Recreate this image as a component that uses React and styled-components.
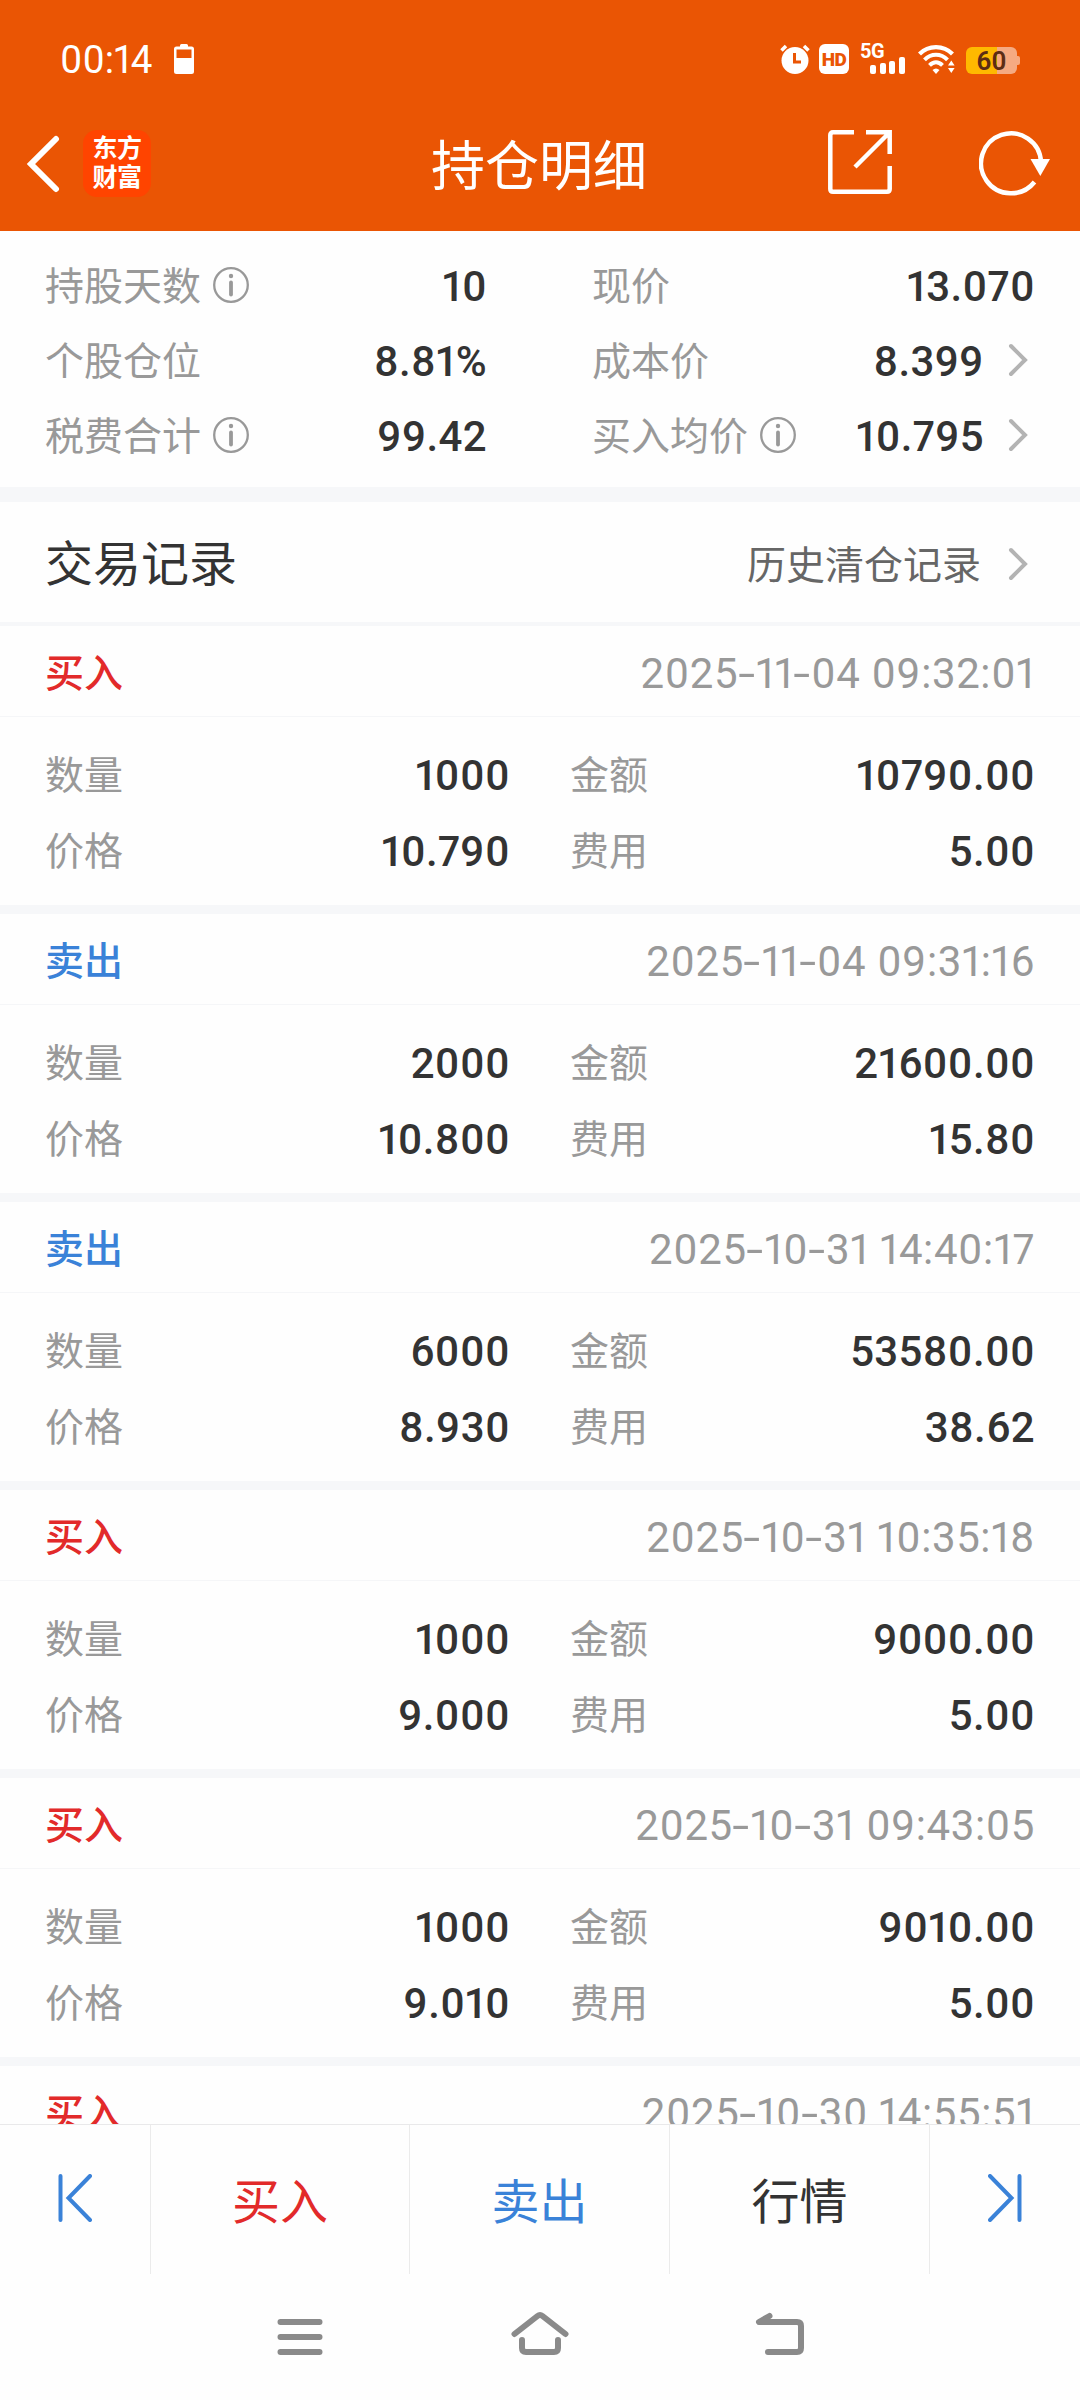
import React from "react";
import styled, { createGlobalStyle } from "styled-components";

const GlobalStyle = createGlobalStyle`
  * {
    box-sizing: border-box;
  }
  body {
    margin: 0;
    background: #fefefe;
    font-family: Roboto, "Noto Sans CJK SC", sans-serif;
    font-variant-numeric: proportional-nums;
  }
  svg {
    display: block;
    flex-shrink: 0;
  }
`;

const Screen = styled.div`
  display: flex;
  flex-direction: column;
  width: 1080px;
  height: 2400px;
  overflow: hidden;
  background: #fefefe;
  color: #333;
`;

const Header = styled.header`
  flex-shrink: 0;
  height: 231px;
  background: #ea5504;
  color: #fff;
`;

const StatusBar = styled.div`
  display: flex;
  align-items: flex-end;
  height: 74px;
  padding: 0 60px;
`;

const Clock = styled.span`
  width: 94px;
  font-size: 38.5px;
  line-height: 28px;
  margin-right: 20px;
`;

const StatusIcons = styled.div`
  display: flex;
  align-items: flex-end;
  margin-left: auto;
`;

const HdBadge = styled.span`
  width: 30px;
  height: 30px;
  margin: 0 11px 0 9px;
  border-radius: 6px;
  background: #fff;
  color: #ea5504;
  font-size: 19px;
  font-weight: 900;
  line-height: 31px;
  text-align: center;
  letter-spacing: -0.5px;
`;

const Signal = styled.div`
  display: flex;
  flex-direction: column;
  width: 45px;
  height: 30px;
  margin-right: 13px;
`;

const SignalLabel = styled.span`
  font-size: 20px;
  font-weight: 700;
  line-height: 15px;
  letter-spacing: -0.5px;
`;

const SignalBars = styled.div`
  display: flex;
  align-items: flex-end;
  justify-content: space-between;
  width: 35px;
  margin: -2px 0 0 10px;
`;

const SignalBar = styled.i`
  width: 6px;
  height: ${(props) => props.$height}px;
  border-radius: 2px;
  background: #fff;
`;

const Battery = styled.div`
  display: flex;
  align-items: center;
  height: 27px;
  margin-left: 11px;
  &::after {
    content: "";
    width: 3px;
    height: 9px;
    border-radius: 0 2px 2px 0;
    background: #f5aa82;
  }
`;

const BatteryBody = styled.span`
  width: 51px;
  height: 27px;
  border-radius: 6px;
  background: linear-gradient(to right, #ffb900 61%, #f5aa82 61%);
  color: #5c2d14;
  font-size: 26px;
  font-weight: 600;
  line-height: 29px;
  text-align: center;
`;

const TitleBar = styled.div`
  display: flex;
  align-items: flex-start;
  height: 157px;
  padding: 56px 28px 0 26px;
`;

const Side = styled.div`
  display: flex;
  align-items: center;
  flex: 1;
  height: 67px;
  justify-content: ${(props) => (props.$end ? "flex-end" : "flex-start")};
`;

const Logo = styled.div`
  width: 68px;
  height: 67px;
  margin-left: 23px;
  padding-top: 2px;
  border-radius: 14px;
  background: #ff4400;
  font-family: "Noto Sans CJK SC", sans-serif;
  font-size: 25px;
  font-weight: 700;
  line-height: 29px;
  text-align: center;
  letter-spacing: -0.5px;
`;

const Title = styled.h1`
  margin: 4px 0 0;
  font-size: 54px;
  font-weight: 400;
  line-height: 68px;
`;

const Actions = styled.div`
  display: flex;
  gap: 87px;
  margin: 0 1px 2px 0;
`;

const Summary = styled.section`
  display: grid;
  grid-template-columns: 442px 443px;
  column-gap: 105px;
  align-content: start;
  flex-shrink: 0;
  height: 256px;
  padding: 18px 45px 0;
`;

const SummaryItem = styled.div`
  display: flex;
  align-items: center;
  height: 75px;
`;

const Label = styled.span`
  color: #999;
  font-size: 39px;
  line-height: 60px;
`;

const InfoIcon = styled.svg`
  width: 36px;
  height: 36px;
  margin: 0 0 4px 12px;
`;

const Value = styled.span`
  margin-left: auto;
  font-size: 42px;
  font-weight: 500;
  line-height: 60px;
  letter-spacing: 0.35px;
`;

const Chevron = styled.svg`
  width: 20px;
  height: 34px;
  margin: 0 7px 4px ${(props) => props.$gap}px;
`;

const Divider = styled.div`
  flex-shrink: 0;
  height: ${(props) => props.$height}px;
  background: #f6f7f9;
`;

const SectionHead = styled.div`
  display: flex;
  align-items: center;
  flex-shrink: 0;
  height: 120px;
  padding: 6px 45px 0;
`;

const SectionTitle = styled.h2`
  margin: 0;
  font-size: 48px;
  font-weight: 400;
  line-height: 70px;
`;

const HistoryLink = styled.a`
  display: flex;
  align-items: center;
  margin: 2px 0 0 auto;
  color: #666;
  font-size: 39px;
  line-height: 60px;
`;

const Records = styled.section`
  flex: 1;
  min-height: 0;
  overflow: hidden;
`;

const Record = styled.article`
  height: 288px;
  border-bottom: 9px solid #f6f7f9;
`;

const RecordHead = styled.div`
  display: flex;
  align-items: center;
  justify-content: space-between;
  height: 91px;
  padding: 5px 45px 0;
  border-bottom: 1px solid #f5f6f8;
`;

const RecordType = styled.span`
  color: ${(props) => (props.$sell ? "#3a82d8" : "#e22a2a")};
  font-size: 39px;
  font-weight: 500;
  line-height: 60px;
`;

const RecordTime = styled.time`
  color: #999;
  font-size: 42px;
  line-height: 60px;
  letter-spacing: 0.6px;
`;

const Dash = styled.span`
  display: inline-block;
  margin: 0 3px 0 2.5px;
  transform: scaleX(1.45);
`;

const RecordBody = styled.div`
  display: grid;
  grid-template-columns: 465px 465px;
  column-gap: 60px;
  padding: 21px 45px 0;
`;

const Cell = styled.div`
  display: flex;
  align-items: center;
  height: 76px;
`;

const Toolbar = styled.nav`
  display: grid;
  grid-template-columns: 151px 259px 260px 260px 150px;
  flex-shrink: 0;
  height: 150px;
  border-top: 1px solid #e9e9ea;
`;

const ToolButton = styled.button`
  display: flex;
  align-items: center;
  justify-content: center;
  padding: 0 0 3px;
  border: 0;
  border-right: 1px solid #ebebeb;
  background: none;
  color: ${(props) => props.$color};
  font-family: inherit;
  font-size: 48px;
  &:last-child {
    border-right: 0;
  }
`;

const SystemNav = styled.div`
  display: flex;
  justify-content: center;
  gap: 180px;
  flex-shrink: 0;
  height: 126px;
  padding-top: 33px;
`;

const NavIcon = styled.svg`
  width: 60px;
  height: 60px;
  fill: none;
  stroke: #8a8a8a;
  stroke-width: 6;
  stroke-linecap: round;
  stroke-linejoin: round;
`;

const records = [
  { time: "2025-11-04 09:32:01", count: "1000", amount: "10790.00", price: "10.790", fee: "5.00" },
  { sell: true, time: "2025-11-04 09:31:16", count: "2000", amount: "21600.00", price: "10.800", fee: "15.80" },
  { sell: true, time: "2025-10-31 14:40:17", count: "6000", amount: "53580.00", price: "8.930", fee: "38.62" },
  { time: "2025-10-31 10:35:18", count: "1000", amount: "9000.00", price: "9.000", fee: "5.00" },
  { time: "2025-10-31 09:43:05", count: "1000", amount: "9010.00", price: "9.010", fee: "5.00" },
  { time: "2025-10-30 14:55:51" },
];

const summary = [
  { label: "持股天数", value: "10", info: true },
  { label: "现价", value: "13.070" },
  { label: "个股仓位", value: "8.81%" },
  { label: "成本价", value: "8.399", link: true },
  { label: "税费合计", value: "99.42", info: true },
  { label: "买入均价", value: "10.795", info: true, link: true },
];

function Info() {
  return (
    <InfoIcon viewBox="0 0 36 36">
      <circle cx="18" cy="18" r="16.8" fill="none" stroke="#999" strokeWidth="2.3" />
      <circle cx="18" cy="9" r="2.2" fill="#999" />
      <path d="M18 15.500v12" stroke="#999" strokeWidth="3.800" strokeLinecap="round" />
    </InfoIcon>
  );
}

function Arrow({ gap = 24 }) {
  return (
    <Chevron $gap={gap} viewBox="0 0 20 34" fill="none" stroke="#b3b3b3" strokeWidth="4" strokeLinecap="round">
      <path d="M3 3l14 14L3 31" />
    </Chevron>
  );
}

function Field({ label, value }) {
  return (
    <Cell>
      <Label>{label}</Label>
      <Value>{value}</Value>
    </Cell>
  );
}

// Roboto's hyphen is short next to its digits, so the date dashes are widened
function Timestamp({ value }) {
  const [year, month, rest] = value.split("-");
  return (
    <RecordTime>
      {year}
      <Dash>-</Dash>
      {month}
      <Dash>-</Dash>
      {rest}
    </RecordTime>
  );
}

export default function App() {
  return (
    <Screen>
      <GlobalStyle />
      <Header>
        <StatusBar>
          <Clock>00:14</Clock>
          <svg width="20" height="30" viewBox="0 0 20 30" fill="#fff">
            <path
              fillRule="evenodd"
              d="M6 1.500Q6 0 7.500 0h5Q14 0 14 1.500V2.500h3.500Q20 2.500 20 5v22.500Q20 30 17.500 30h-15Q0 30 0 27.500V5Q0 2.500 2.500 2.500H6zM2.500 5.500v8.500h15V5.500z"
            />
          </svg>
          <StatusIcons>
            <svg width="30" height="30" viewBox="0 0 30 30">
              <circle cx="15" cy="16.500" r="13.500" fill="#fff" />
              <path d="M1.500 6.500L6 2M28.500 6.500L24 2" stroke="#fff" strokeWidth="3.500" />
              <path d="M14.500 9v9h6.500" fill="none" stroke="#ea5504" strokeWidth="3" />
            </svg>
            <HdBadge>HD</HdBadge>
            <Signal>
              <SignalLabel>5G</SignalLabel>
              <SignalBars>
                {[9, 11, 13, 17].map((height) => (
                  <SignalBar key={height} $height={height} />
                ))}
              </SignalBars>
            </Signal>
            <svg width="37" height="30" viewBox="0 0 37 30" fill="none" stroke="#fff">
              <path d="M1.500 10C10.500.8 25.500.8 34.500 10" strokeWidth="4.200" />
              <path d="M6.500 15.800C13 9 23 9 29.500 15.800M11.500 21.300c4-4 9-4 13 0" strokeWidth="4" />
              <path d="M14.500 26q3.500-3 7 0L18 30z" fill="#fff" stroke="none" />
              <path d="M30 21.500l3.300-5 3.300 5zM30 24h6.600l-3.300 5z" fill="#fff" stroke="none" />
            </svg>
            <Battery>
              <BatteryBody>60</BatteryBody>
            </Battery>
          </StatusIcons>
        </StatusBar>
        <TitleBar>
          <Side>
            <svg width="34" height="58" viewBox="0 0 34 58" fill="none" stroke="#fff" strokeWidth="6">
              <path d="M30 4L5 29l25 25" strokeLinecap="round" />
            </svg>
            <Logo>
              东方
              <br />
              财富
            </Logo>
          </Side>
          <Title>持仓明细</Title>
          <Side $end>
            <Actions>
              <svg width="64" height="64" viewBox="0 0 64 64" fill="none" stroke="#fff" strokeWidth="4.500">
                <path d="M26 2.300H5Q2.300 2.300 2.300 5v54q0 2.700 2.700 2.700h54q2.700 0 2.700-2.700V36" />
                <path d="M38 2.300h23.700V24M60 4L27 37" />
              </svg>
              <svg width="72" height="66" viewBox="0 0 72 66">
                <path d="M55.500 52A30 30 0 1 1 62 32" fill="none" stroke="#fff" strokeWidth="4.500" />
                <path d="M51.500 29h19.500l-9.700 17z" fill="#fff" />
              </svg>
            </Actions>
          </Side>
        </TitleBar>
      </Header>

      <Summary>
        {summary.map((item) => (
          <SummaryItem key={item.label}>
            <Label>{item.label}</Label>
            {item.info && <Info />}
            <Value>{item.value}</Value>
            {item.link && <Arrow />}
          </SummaryItem>
        ))}
      </Summary>
      <Divider $height={15} />

      <SectionHead>
        <SectionTitle>交易记录</SectionTitle>
        <HistoryLink>
          历史清仓记录
          <Arrow gap={27} />
        </HistoryLink>
      </SectionHead>
      <Divider $height={4} />

      <Records>
        {records.map((record) => (
          <Record key={record.time}>
            <RecordHead>
              <RecordType $sell={record.sell}>{record.sell ? "卖出" : "买入"}</RecordType>
              <Timestamp value={record.time} />
            </RecordHead>
            {record.count && (
              <RecordBody>
                <Field label="数量" value={record.count} />
                <Field label="金额" value={record.amount} />
                <Field label="价格" value={record.price} />
                <Field label="费用" value={record.fee} />
              </RecordBody>
            )}
          </Record>
        ))}
      </Records>

      <Toolbar>
        <ToolButton>
          <svg width="34" height="48" viewBox="0 0 34 48" fill="none" stroke="#3a82d8" strokeWidth="4" strokeLinecap="round">
            <path d="M2.500 2v44M32 2L10.500 24 32 46" />
          </svg>
        </ToolButton>
        <ToolButton $color="#e22a2a">买入</ToolButton>
        <ToolButton $color="#3a82d8">卖出</ToolButton>
        <ToolButton $color="#333">行情</ToolButton>
        <ToolButton>
          <svg width="34" height="48" viewBox="0 0 34 48" fill="none" stroke="#3a82d8" strokeWidth="4" strokeLinecap="round">
            <path d="M31.500 2v44M2 2l21.500 22L2 46" />
          </svg>
        </ToolButton>
      </Toolbar>

      <SystemNav>
        <NavIcon viewBox="0 0 60 60">
          <path d="M10.500 15h39M10.500 30h39M10.500 45h39" />
        </NavIcon>
        <NavIcon viewBox="0 0 60 60">
          <path d="M4.500 27L27.500 9q2.500-2 5 0l23 18M12 33v8q0 4 4 4h28q4 0 4-4v-8" />
        </NavIcon>
        <NavIcon viewBox="0 0 60 60">
          <path d="M19.500 9L9 15h38q4 0 4 4v22q0 4-4 4H18" />
        </NavIcon>
      </SystemNav>
    </Screen>
  );
}
